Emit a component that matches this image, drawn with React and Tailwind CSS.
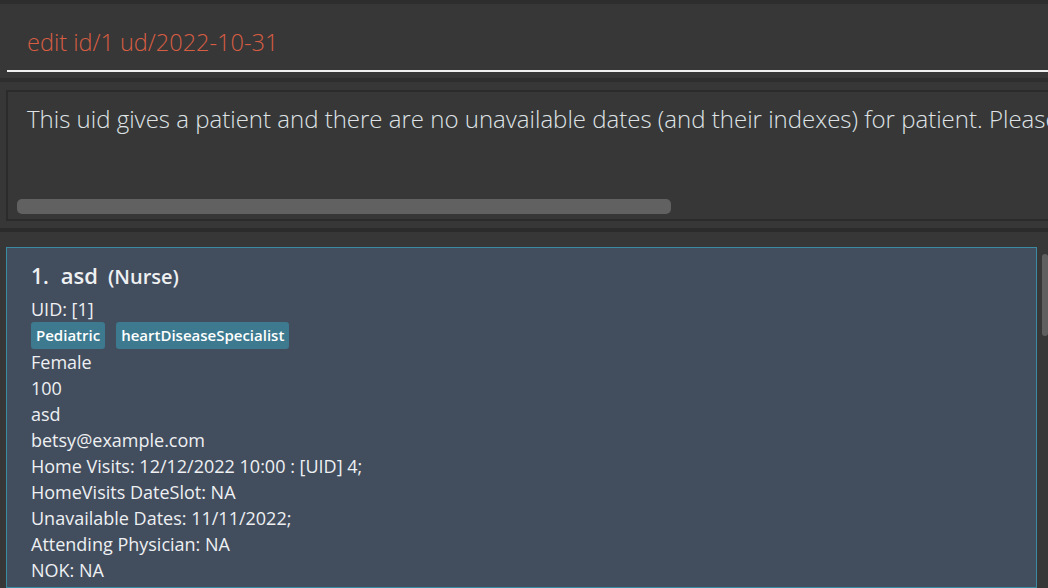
export default function App() {
  const lines = [
    "Female",
    "100",
    "asd",
    "betsy@example.com",
    "Home Visits: 12/12/2022 10:00 : [UID] 4;",
    "HomeVisits DateSlot: NA",
    "Unavailable Dates: 11/11/2022;",
    "Attending Physician: NA",
    "NOK: NA",
  ];

  return (
    <div
      className="w-[1048px] h-[588px] overflow-hidden bg-[#373737] flex flex-col"
      style={{ fontFamily: '"Open Sans", "Noto Sans", sans-serif' }}
    >
      {/* command box */}
      <div className="border-t-4 border-[#2d2d2d] h-[78px] pl-[7px] flex flex-col">
        <div className="h-[66px] flex items-end pb-[16px] pl-[20px]">
          <span className="text-[23.5px] text-[#d75d43] font-light leading-none whitespace-nowrap">
            edit id/1 ud/2022-10-31
          </span>
        </div>
        <div className="h-[2px] bg-[#f0f0f0]" />
      </div>

      <div className="h-[4px] bg-[#2e2e2e]" />

      {/* result box */}
      <div className="pt-[8px] pl-[6px] h-[146px]">
        <div className="h-[131px] border-2 border-r-0 border-[#2b2b2b] bg-[#373737] flex flex-col overflow-hidden">
          <div className="pl-[19px] pt-[13px] h-[107px] text-[#dfe3e6] text-[24px] font-light leading-[28px] whitespace-nowrap overflow-hidden">
            This uid gives a patient and there are no unavailable dates (and their indexes) for patient. Please
          </div>
          <div className="pl-[9px]">
            <div className="w-[654px] h-[15px] rounded-[5px] bg-[#616161]" />
          </div>
        </div>
      </div>

      <div className="h-[4px] bg-[#2b2b2b]" />

      {/* list */}
      <div className="flex flex-1 pt-[15px] pl-[6px] gap-[5px]">
        <div className="w-[1031px] bg-[#424d5e] border border-[#3b8ca3] pl-[24px] pt-[14px] text-[#eef0f2]">
          <div className="flex items-baseline font-semibold">
            <span className="text-[21px] leading-[26px]">1.</span>
            <span className="text-[22px] leading-[26px] ml-[12px]">asd</span>
            <span className="text-[20px] leading-[26px] ml-[10px]">(Nurse)</span>
          </div>
          <div className="text-[18px] leading-[26px] mt-[6px]">UID: [1]</div>
          <div className="flex gap-[11px] h-[27px] items-center">
            <span className="bg-[#3d7a8f] text-white text-[15px] font-semibold leading-[27px] px-[5px] rounded-[3px]">
              Pediatric
            </span>
            <span className="bg-[#3d7a8f] text-white text-[15px] font-semibold leading-[27px] px-[5px] rounded-[3px]">
              heartDiseaseSpecialist
            </span>
          </div>
          {lines.map((l) => (
            <div key={l} className="text-[18px] leading-[26px] whitespace-nowrap">
              {l}
            </div>
          ))}
        </div>
        <div className="pt-[7px]">
          <div className="w-[6px] h-[82px] rounded-full bg-[#5f5f5f]" />
        </div>
      </div>
    </div>
  );
}
